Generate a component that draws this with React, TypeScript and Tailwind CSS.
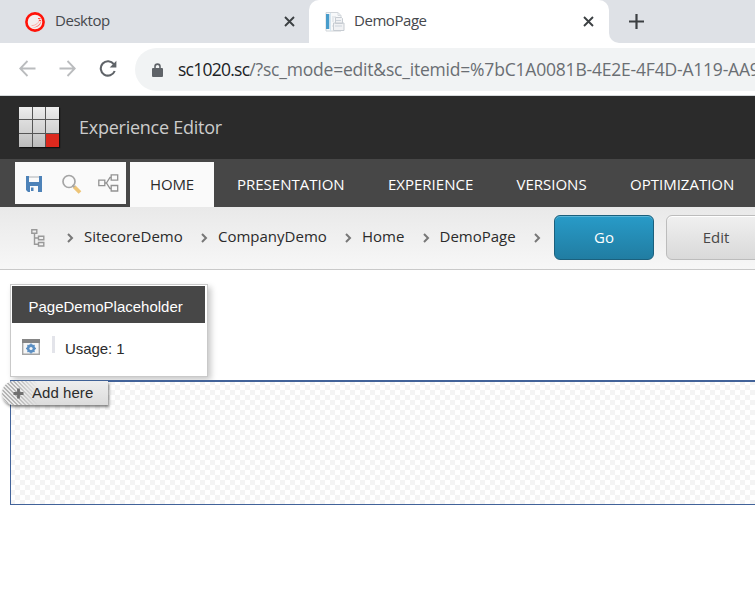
import React from "react";

const CHROME = "font-['Open_Sans','Noto_Sans',sans-serif]";

function Close() {
  return (
    <svg width="11" height="11" viewBox="0 0 11 11" stroke="#3c4043" strokeWidth="1.9">
      <path d="M1 1 10 10M10 1 1 10" />
    </svg>
  );
}

function TabStrip() {
  return (
    <div className={`flex h-[43px] bg-[#dee1e6] text-[15px] text-[#45484c] ${CHROME}`}>
      <div className="flex w-[309px] items-center rounded-br-[10px] bg-[#dee1e6] pl-[25px] pr-[14px]">
        <svg width="20" height="20" viewBox="0 0 20 20" fill="none">
          <circle cx="10" cy="10" r="8.6" fill="#f4eeee" stroke="#ff1208" strokeWidth="2.600" />
          <path d="M16.300 8c.3 5-4.300 8.300-9.300 7.500 4.500-.3 8-2.500 9.300-7.500z" fill="#ff7168" />
          <path d="M14.500 6.500c.1 4-3.500 7-8 7.200" stroke="#ff9d96" strokeWidth=".8" />
          <path d="M13 6.500h2.500M14 8.500h2" stroke="#ff5148" strokeWidth="1.200" />
        </svg>
        <span className="mb-[2px] ml-[10px] w-[70px] whitespace-nowrap tracking-[-0.45px]">Desktop</span>
        <span className="ml-auto"><Close /></span>
      </div>
      <div className="flex w-[300px] bg-[#dee1e6]">
        <div className="flex w-full items-center rounded-t-[10px] bg-white pl-[15px] pr-[15px]">
          <svg width="21" height="20" viewBox="0 0 21 20">
            <path d="M2 .5h12l3 3V19H2z" fill="#f8f9fa" stroke="#d2d6da" />
            <path d="M2 2h3.300v15H2z" fill="#479ccb" />
            <path d="M6.500 1v18" stroke="#d5e5ef" />
            <path d="M14 .5v3h3M8 5h4M8 7h2M8 9h2M8 14h1" fill="none" stroke="#d6dbe0" />
            <path d="M11.500 5.500h6l1 1v5h-7zM9.500 11h10.500v7.500H9.500z" fill="#f1f2f4" stroke="#c7ccd2" />
            <path d="M12 8.500h5M11 14h7" stroke="#cdd4dc" />
          </svg>
          <span className="mb-[2px] ml-[9px] whitespace-nowrap tracking-[-0.45px]">DemoPage</span>
          <span className="ml-auto"><Close /></span>
        </div>
      </div>
      <div className="flex-1 bg-white">
        <div className="flex h-full items-center rounded-bl-[10px] bg-[#dee1e6] pl-5">
          <svg width="15" height="15" viewBox="0 0 15 15" stroke="#3c4043" strokeWidth="2.200">
            <path d="M7.500 0v15M0 7.500h15" />
          </svg>
        </div>
      </div>
    </div>
  );
}

function AddressBar() {
  return (
    <div className="flex h-[53px] items-start border-b border-[#d6dadc] bg-white pt-[5px]">
      <div className="flex h-[43px] w-[135px] shrink-0 items-center pb-[2px] pl-[19px]">
        <svg width="17" height="17" viewBox="0 0 17 17" fill="none" stroke="#babcbe" strokeWidth="1.800">
          <path d="M16.500 8.500H1.500M8.500 1 1.200 8.500 8.500 16" />
        </svg>
        <svg className="ml-[23px]" width="17" height="17" viewBox="0 0 17 17" fill="none" stroke="#babcbe" strokeWidth="1.800">
          <path d="M.5 8.500h15M8.500 1l7.300 7.500L8.500 16" />
        </svg>
        <svg className="ml-[23px]" width="18" height="17" viewBox="0 0 18 17" fill="none">
          <path d="M14.800 4.200A7.200 7.200 0 1 0 15.700 11" stroke="#5f6368" strokeWidth="2.100" />
          <path d="M17.400.8v6.700h-6.700z" fill="#5f6368" />
        </svg>
      </div>
      <div className={`flex h-[43px] flex-1 items-center overflow-hidden rounded-l-full bg-[#f1f3f4] pl-[17px] ${CHROME}`}>
        <svg className="shrink-0" width="11" height="14" viewBox="0 0 11 14">
          <path d="M3 6V3.600a2.500 2.500 0 0 1 5 0V6" fill="none" stroke="#5f6368" strokeWidth="1.600" />
          <rect y="5" width="11" height="9" rx="1" fill="#5f6368" />
        </svg>
        <span className="ml-[15px] whitespace-nowrap text-[17.500px] tracking-[-0.2px] text-[#6a6e73]">
          <span className="tracking-[-0.75px] text-[#202124]">sc1020.sc</span>/?sc_mode=edit&amp;sc_itemid=%7bC1A0081B-4E2E-4F4D-A119-AA9
        </span>
      </div>
    </div>
  );
}

function AppHeader() {
  return (
    <div className="flex h-[63px] items-center bg-[#2b2b2b] pb-px pl-[19px]">
      <div className="grid h-[40px] w-[40px] grid-cols-[13px_12px_13px] grid-rows-[12px_13px_13px] gap-px bg-[#555] shadow-[1px_1px_1px_#111]">
        {Array.from({ length: 9 }, (_, i) => (
          <div
            key={i}
            className={
              i === 8
                ? "bg-[#dc291e]"
                : i < 3
                  ? "bg-linear-to-b from-[#eee] to-[#dedede]"
                  : i < 6
                    ? "bg-linear-to-b from-[#dedede] to-[#d0d0d0]"
                    : "bg-linear-to-b from-[#cdcdcd] to-[#bbb]"
            }
          />
        ))}
      </div>
      <span className="ml-5 whitespace-nowrap font-['Open_Sans',sans-serif] text-[18px] tracking-[-0.25px] text-[#ccc]">Experience Editor</span>
    </div>
  );
}

function Ribbon() {
  return (
    <div className="flex h-[48px] bg-[#474747] pt-[3px] font-['Open_Sans',sans-serif] text-[15px] text-white">
      <div className="ml-[15px] flex h-[42px] w-[111px] items-center bg-[#fafafa] pl-[11px]">
        <svg width="16" height="16" viewBox="0 0 16 16" className="mt-[2px]">
          <path d="M0 0h16v16H2l-2-2z" fill="#4d82b8" />
          <path d="M3 0h10v6H3zM4 10h8v6H4z" fill="#fafafa" />
          <path d="M3 1h10" stroke="#b9bcc0" strokeWidth="1.200" />
          <path d="M5 11.500h2.500V15H5z" fill="#4d82b8" />
        </svg>
        <svg className="ml-[20px] mt-[2px]" width="20" height="20" viewBox="0 0 20 20" fill="none">
          <path d="m12 12.500 6 6" stroke="#edc477" strokeWidth="3.800" />
          <path d="m10.500 11 2 2" stroke="#aaa" strokeWidth="2" />
          <circle cx="7" cy="7.500" r="6" stroke="#a5a5a5" strokeWidth="1.700" />
        </svg>
        <svg className="ml-[16px]" width="21" height="18" viewBox="0 0 21 18" fill="none" stroke="#929292" strokeWidth="1.300">
          <path d="M.8 6.200h6v5.500h-6zM13.200.8h6.500v5.400h-6.500zM13.200 11.500h6.500V17h-6.500zM7 9h2m4-5.500h-1L8.500 9l3.500 5.500h1" />
        </svg>
      </div>
      <div className="ml-1 flex h-[45px] w-[84px] items-center justify-center bg-[#fafafa] text-[#2b2b2b]"><span className="tracking-[-0.1px]">HOME</span></div>
      <div className="ml-[23px] flex h-[45px] items-center whitespace-nowrap">
        <span className="w-[151px]">PRESENTATION</span>
        <span className="w-[128.500px]">EXPERIENCE</span>
        <span className="w-[113.500px]">VERSIONS</span>
        <span>OPTIMIZATION</span>
      </div>
    </div>
  );
}

function Chevron() {
  return (
    <svg className="mt-[4px] shrink-0" width="7" height="10" viewBox="0 0 7 10" fill="none" stroke="#777" strokeWidth="2">
      <path d="m1 1 4 4-4 4" />
    </svg>
  );
}

function Breadcrumb() {
  return (
    <div className="flex h-[63px] items-center overflow-hidden border-b border-[#c9c9c9] bg-linear-to-b from-[#e9e9e9] to-[#f7f7f7] pb-[2px] pl-[31px] font-['Open_Sans',sans-serif] text-[15px] text-[#2b2b2b]">
      <svg className="mt-[2px] shrink-0" width="14" height="18" viewBox="0 0 14 18" fill="none" stroke="#999" strokeWidth="1.400">
        <path d="M.8.800h5v3.500h-5zM7.500 7.200h5.300v3.500H7.500zM7.500 13.500h5.300V17H7.500zM3.500 4.500v10.700h4M3.500 9h4" />
      </svg>
      <div className="flex w-[501px] shrink-0 items-center whitespace-nowrap pb-[2px] pl-[22px]">
        <Chevron /><span className="ml-[10px] w-[117px]">SitecoreDemo</span>
        <Chevron /><span className="ml-[10px] w-[127px]">CompanyDemo</span>
        <Chevron /><span className="ml-[10px] w-[60.500px]">Home</span>
        <Chevron /><span className="ml-[10px] w-[94.500px]">DemoPage</span>
        <Chevron />
      </div>
      <button className="ml-[8px] h-[45px] w-[100px] shrink-0 rounded-[6px] border border-[#1b607d] bg-linear-to-b from-[#289bc8] to-[#217da2] text-white shadow-[inset_0_1px_0_#5cb6d8]">Go</button>
      <button className="ml-3 h-[45px] w-[100px] shrink-0 rounded-[6px] border border-[#bcbcbc] bg-linear-to-b from-[#f0f0f0] to-[#d9d9d9] text-[#474747] shadow-[inset_0_1px_0_#fff]">Edit</button>
    </div>
  );
}

function PlaceholderCard() {
  return (
    <div className="ml-[10px] mt-[14px] h-[93px] w-[198px] border border-[#c9c9c9] bg-white p-px font-['Liberation_Sans',Arial,sans-serif] text-[15px] text-[#2b2b2b] shadow-[3px_3px_6px_rgba(0,0,0,0.22)]">
      <div className="flex h-[37px] w-[193px] items-center whitespace-nowrap bg-[#474747] pl-[16.500px] pt-[5px] text-white">PageDemoPlaceholder</div>
      <div className="flex h-[52px] items-center pl-[10px]">
        <svg width="18" height="16" viewBox="0 0 18 16" className="mb-[4px]">
          <path d="M.7.700h16.600v14.600H.7z" fill="#f5f5f5" stroke="#a5a5a5" strokeWidth="1.400" />
          <path d="M0 0h18v4H0z" fill="#858585" />
          <circle cx="9" cy="9.500" r="3" fill="none" stroke="#5b8fc3" strokeWidth="2.400" />
          <path d="M9 4.500v10M4 9.500h10M5.500 6l7 7M12.500 6l-7 7" stroke="#5b8fc3" strokeWidth="1.300" />
          <circle cx="9" cy="9.500" r="1.600" fill="#f5f5f5" />
        </svg>
        <span className="mb-[10px] ml-[12px] h-[17px] w-[3px] bg-[#e3e4ea]" />
        <span className="ml-[10px] tracking-[-0.08px]">Usage: 1</span>
      </div>
    </div>
  );
}

function DropZone() {
  return (
    <div className="ml-[10px] mt-[3px] h-[125px] border-b border-l border-t-2 border-[#42639a] bg-[repeating-conic-gradient(#f4f4f4_0_25%,#fff_0_50%)] bg-[length:10px_10px] bg-[position:-6px_-2px]">
      <button className="-ml-[9px] -mt-px flex h-[24px] w-[106px] items-center rounded-l-full bg-linear-to-b from-[#eee] to-[#dcdcdc] font-['Liberation_Sans',Arial,sans-serif] text-[15px] text-[#2b2b2b] shadow-[1px_2px_3px_rgba(0,0,0,0.5)]">
        <span className="grid h-full w-[30px] shrink-0 items-center">
          <span className="col-start-1 row-start-1 h-full w-[36px] rounded-l-full bg-[repeating-linear-gradient(-135deg,#b5b5b5_0_1px,#ececec_1px_2.828px)] mask-[linear-gradient(90deg,#000_35%,transparent)]" />
          <svg className="z-10 col-start-1 row-start-1 ml-[11px]" width="11" height="11" viewBox="0 0 11 11" stroke="#707070" strokeWidth="2.800">
            <path d="M5.500.5v10M.5 5.500h10" />
          </svg>
        </span>
        <span className="relative z-10 whitespace-nowrap tracking-[0.05px]">Add here</span>
      </button>
    </div>
  );
}

export default function App() {
  return (
    <div className="h-[602px] w-[755px] overflow-hidden bg-white">
      <TabStrip />
      <AddressBar />
      <AppHeader />
      <Ribbon />
      <Breadcrumb />
      <PlaceholderCard />
      <DropZone />
    </div>
  );
}
